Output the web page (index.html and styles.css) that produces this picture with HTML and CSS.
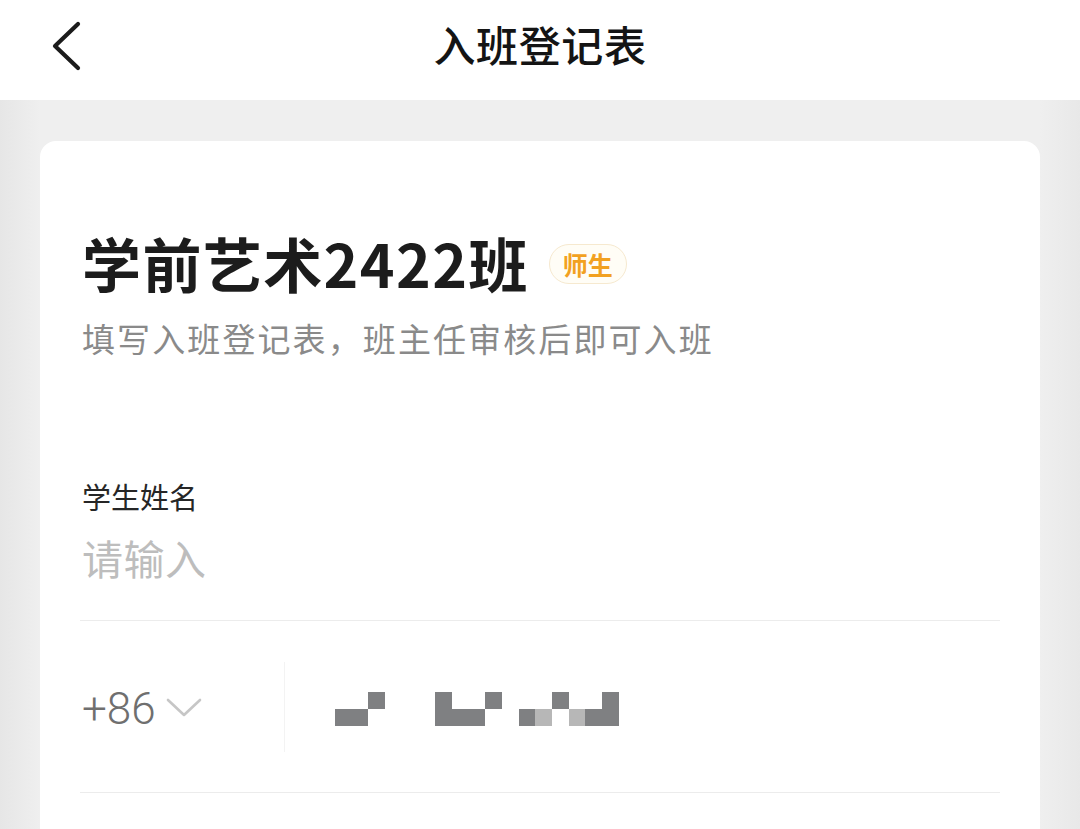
FILE: index.html
```html
<!DOCTYPE html>
<html lang="zh-CN">
<head>
<meta charset="utf-8">
<title>入班登记表</title>
<link rel="stylesheet" href="styles.css">
</head>
<body>
<div class="page">
  <header class="nav">
    <svg class="back" width="40" height="56" viewBox="0 0 40 56" aria-hidden="true">
      <polyline points="28,5 5,27 28,49" fill="none" stroke="#1b1b1b" stroke-width="4.2" stroke-linecap="round" stroke-linejoin="round"/>
    </svg>
    <h1 class="nav-title">入班登记表</h1>
  </header>
  <main class="content">
    <section class="card">
      <div class="class-head">
        <h2 class="class-name">学前艺术2422班</h2>
        <span class="badge">师生</span>
      </div>
      <p class="hint">填写入班登记表，班主任审核后即可入班</p>

      <div class="field">
        <div class="field-label">学生姓名</div>
        <div class="field-input">请输入</div>
      </div>

      <div class="phone-row">
        <div class="code">
          <span class="code-text">+86</span>
          <svg class="chev" width="38" height="22" viewBox="0 0 38 22" aria-hidden="true">
            <polyline points="3,3 19,18 35,3" fill="none" stroke="#c6c6c6" stroke-width="2.6" stroke-linecap="round" stroke-linejoin="round"/>
          </svg>
        </div>
        <div class="vdiv"></div>
        <div class="mosaic">
          <i class="e"></i><i class="e"></i><i class="d"></i><i class="e"></i><i class="e"></i><i class="e"></i><i class="d"></i><i class="e"></i><i class="e"></i><i class="d"></i><i class="e"></i><i class="e"></i><i class="e"></i><i class="d"></i><i class="e"></i><i class="e"></i><i class="d"></i>
          <i class="d"></i><i class="d"></i><i class="e"></i><i class="e"></i><i class="e"></i><i class="e"></i><i class="d"></i><i class="d"></i><i class="d"></i><i class="e"></i><i class="e"></i><i class="d"></i><i class="l"></i><i class="e"></i><i class="l"></i><i class="d"></i><i class="d"></i>
        </div>
      </div>
    </section>
  </main>
</div>
</body>
</html>
```

FILE: styles.css
```css
html, body {
  margin: 0;
  padding: 0;
}
body {
  width: 1080px;
  height: 829px;
  overflow: hidden;
  background: #ededed;
  font-family: "Noto Sans CJK SC", "Noto Sans", sans-serif;
}
.page {
  display: flex;
  flex-direction: column;
}
.nav {
  height: 100px;
  background: #ffffff;
  display: flex;
  align-items: center;
  justify-content: center;
  position: relative;
}
.back {
  position: absolute;
  left: 50px;
  top: 19px;
}
.nav-title {
  margin: 0;
  font-size: 42px;
  font-weight: 500;
  color: #141414;
  line-height: 56px;
  margin-top: -12px;
  letter-spacing: 0.6px;
}
.content {
  padding: 41px 40px 0 40px;
  background: linear-gradient(to right, #e6e6e6 0, #efefef 40px, #efefef 1040px, #e8e8e8 1080px);
}
.card {
  background: #ffffff;
  border-radius: 16px;
  padding: 87px 40px 0 42px;
  min-height: 760px;
  box-sizing: border-box;
}
.class-head {
  display: flex;
  align-items: center;
  height: 70px;
}
.class-name {
  margin: 0;
  font-size: 59px;
  font-weight: 700;
  color: #1c1c1c;
  line-height: 70px;
  letter-spacing: 1.4px;
}
.badge {
  margin-left: 20px;
  margin-top: 2px;
  height: 38px;
  padding: 0 13px;
  border: 1.5px solid #f6e9cf;
  border-radius: 21px;
  background: #fffdf6;
  color: #f2a121;
  font-size: 25px;
  line-height: 38px;
  font-weight: 700;
}
.hint {
  margin: 18px 0 0 0;
  font-size: 33px;
  line-height: 44px;
  color: #8a8a8a;
  letter-spacing: 2.1px;
}
.field {
  margin-top: 116px;
  padding-bottom: 35px;
  border-bottom: 1px solid #ececec;
  width: 918px;
  margin-left: -2px;
  padding-left: 2px;
}
.field-label {
  font-size: 29px;
  line-height: 40px;
  color: #262626;
}
.field-input {
  margin-top: 13px;
  font-size: 41px;
  line-height: 56px;
  color: #bdbdbd;
  letter-spacing: 0.5px;
}
.phone-row {
  display: flex;
  align-items: center;
  height: 171px;
  border-bottom: 1px solid #ececec;
  width: 918px;
  margin-left: -2px;
  padding-left: 2px;
}
.code {
  width: 202px;
  display: flex;
  align-items: center;
}
.code-text {
  font-family: "Roboto", "Noto Sans", sans-serif;
  font-size: 44px;
  font-weight: 300;
  color: #6f6f6f;
  line-height: 56px;
  margin-top: 4px;
}
.chev {
  margin-left: 9px;
  margin-top: 2px;
}
.vdiv {
  width: 1px;
  height: 90px;
  background: #f3f3f3;
}
.mosaic {
  margin-left: 50px;
  margin-top: 4px;
  display: grid;
  grid-template-columns: repeat(17, 16.7px);
  grid-template-rows: 17px 17px;
}
.mosaic i {
  display: block;
}
.mosaic .d {
  background: #7f8082;
}
.mosaic .l {
  background: #b7b7b7;
}
.mosaic .e {
  background: transparent;
}
```
